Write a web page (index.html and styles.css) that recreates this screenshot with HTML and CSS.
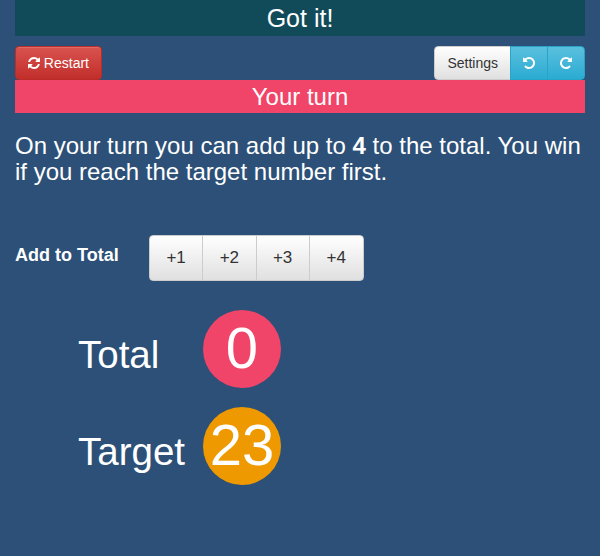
FILE: index.html
```html
<!DOCTYPE html>
<html lang="en">
<head>
    <meta charset="UTF-8">
    <title>Race to the Total</title>
    <link rel="stylesheet" href="styles.css">
</head>
<body>

<main>
    <button class="got-it">Got it!</button>

    <div class="toolbar">
        <button class="btn btn-danger">
            <svg class="icon icon-restart" viewBox="0 0 1792 1792"><path d="M1639 1056q0 5-1 7-64 268-268 434.500t-478 166.500q-146 0-282.500-55t-243.500-157l-129 129q-19 19-45 19t-45-19-19-45v-448q0-26 19-45t45-19h448q26 0 45 19t19 45-19 45l-137 137q71 66 161 102t187 36q134 0 250-65t186-179q11-17 53-117 8-23 30-23h192q13 0 22.500 9.500t9.500 22.500zm25-800v448q0 26-19 45t-45 19h-448q-26 0-45-19t-19-45 19-45l138-138q-148-137-349-137-134 0-250 65t-186 179q-11 17-53 117-8 23-30 23h-199q-13 0-22.500-9.500t-9.500-22.500v-7q65-268 270-434.500t480-166.500q146 0 284 55.500t245 156.500l130-129q19-19 45-19t45 19 19 45z"/></svg>
            Restart
        </button>
        <div class="btn-group">
            <button class="btn btn-default">Settings</button>
            <button class="btn btn-info"><svg class="icon" viewBox="0 0 1792 1792"><path d="M1664 896q0 156-61 298t-164 245-245 164-298 61q-172 0-327-72.500t-264-204.500q-7-10-6.500-22.500t8.500-20.500l137-138q10-9 25-9 16 2 23 12 73 95 179 147t225 52q104 0 198.500-40.500t163.500-109.500 109.500-163.500 40.500-198.500-40.500-198.500-109.500-163.500-163.500-109.500-198.500-40.500q-98 0-188 35.500t-160 101.500l137 138q31 30 14 69-17 40-59 40h-448q-26 0-45-19t-19-45v-448q0-42 40-59 39-17 69 14l130 129q107-101 244.500-156.500t284.500-55.500q156 0 298 61t245 164 164 245 61 298z"/></svg></button>
            <button class="btn btn-info"><svg class="icon" viewBox="0 0 1792 1792"><path d="M1664 256v448q0 26-19 45t-45 19h-448q-42 0-59-40-17-39 14-69l138-138q-148-137-349-137-104 0-198.500 40.500t-163.500 109.500-109.500 163.500-40.500 198.500 40.500 198.500 109.500 163.500 163.500 109.500 198.500 40.500q119 0 225-52t179-147q7-10 23-12 15 0 25 9l137 138q9 8 9.500 20.500t-7.500 22.500q-109 132-264 204.500t-327 72.500q-156 0-298-61t-245-164-164-245-61-298 61-298 164-245 245-164 298-61q147 0 284.500 55.500t244.500 156.500l130-129q29-31 70-14 39 17 39 59z"/></svg></button>
        </div>
    </div>

    <div class="turn">Your turn</div>

    <p class="intro">On your turn you can add up to <b>4</b> to the total. You win if you reach the target number first.</p>

    <div class="add-row">
        <label class="add-label">Add to Total</label>
        <div class="btn-group add-group">
            <button class="btn btn-default">+1</button>
            <button class="btn btn-default">+2</button>
            <button class="btn btn-default">+3</button>
            <button class="btn btn-default">+4</button>
        </div>
    </div>

    <div class="score-row">
        <span class="score-label">Total</span>
        <span class="circle circle-total">0</span>
    </div>
    <div class="score-row">
        <span class="score-label">Target</span>
        <span class="circle circle-target">23</span>
    </div>
</main>

</body>
</html>
```

FILE: styles.css
```css
body {
    font-family: 'Liberation Sans', Arial, sans-serif;
    background-color: #2c5077;
    color: white;
    margin: 0;
    padding: 0;
}

main {
    padding: 0 15px;
}

button {
    font-family: inherit;
    cursor: pointer;
}

.got-it {
    display: block;
    width: 100%;
    height: 36px;
    border: none;
    padding: 0;
    background-color: #114b5a;
    color: white;
    font-size: 25px;
}

.toolbar {
    display: flex;
    justify-content: space-between;
    align-items: flex-end;
    margin-top: 10px;
    height: 34px;
}

.btn {
    height: 34px;
    padding: 0 12px;
    font-size: 14px;
    border: 1px solid transparent;
    border-radius: 4px;
}

.icon {
    width: 14px;
    height: 14px;
    fill: currentColor;
    vertical-align: -2px;
}

.icon-restart {
    margin-right: -1px;
}

.btn-danger {
    width: 87px;
    padding: 0 1px 0 0;
    color: white;
    background: linear-gradient(#d9534f, #c12e2a);
    border-color: #b92c28;
    box-shadow: inset 0 1px 0 rgba(255, 255, 255, 0.15);
}

.btn-default {
    color: #333;
    background: linear-gradient(#fff, #e0e0e0);
    border-color: #ccc;
}

.btn-info {
    width: 38px;
    padding: 0;
    color: white;
    background: linear-gradient(#5bc0de, #2aabd2);
    border-color: #28a4c9;
}

.btn-group {
    display: flex;
}

.btn-group .btn {
    border-radius: 0;
    margin-left: -1px;
}

.btn-group .btn:first-child {
    border-radius: 4px 0 0 4px;
    margin-left: 0;
}

.btn-group .btn:last-child {
    border-radius: 0 4px 4px 0;
}

.turn {
    background-color: #f14469;
    height: 33px;
    line-height: 33px;
    text-align: center;
    font-size: 24px;
}

.intro {
    margin: 20px 0 0;
    font-size: 24px;
    line-height: 26px;
}

.add-row {
    display: flex;
    margin-top: 50px;
}

.add-label {
    width: 134px;
    font-size: 18px;
    font-weight: bold;
    line-height: 40px;
}

.add-group .btn {
    width: 54.250px;
    height: 46px;
    padding: 0;
    font-size: 17px;
}

.add-group .btn:last-child {
    width: 55px;
}

.score-row {
    display: flex;
    align-items: center;
    margin-left: 63px;
    height: 78px;
}

.add-row + .score-row {
    margin-top: 29px;
}

.score-row + .score-row {
    margin-top: 19px;
}

.score-label {
    width: 125px;
    font-size: 38.500px;
    padding-top: 12px;
}

.circle {
    width: 78px;
    height: 78px;
    border-radius: 50%;
    text-align: center;
    font-size: 58px;
    line-height: 75px;
}

.circle-total {
    background-color: #f14469;
}

.circle-target {
    background-color: #ef9900;
}
```
